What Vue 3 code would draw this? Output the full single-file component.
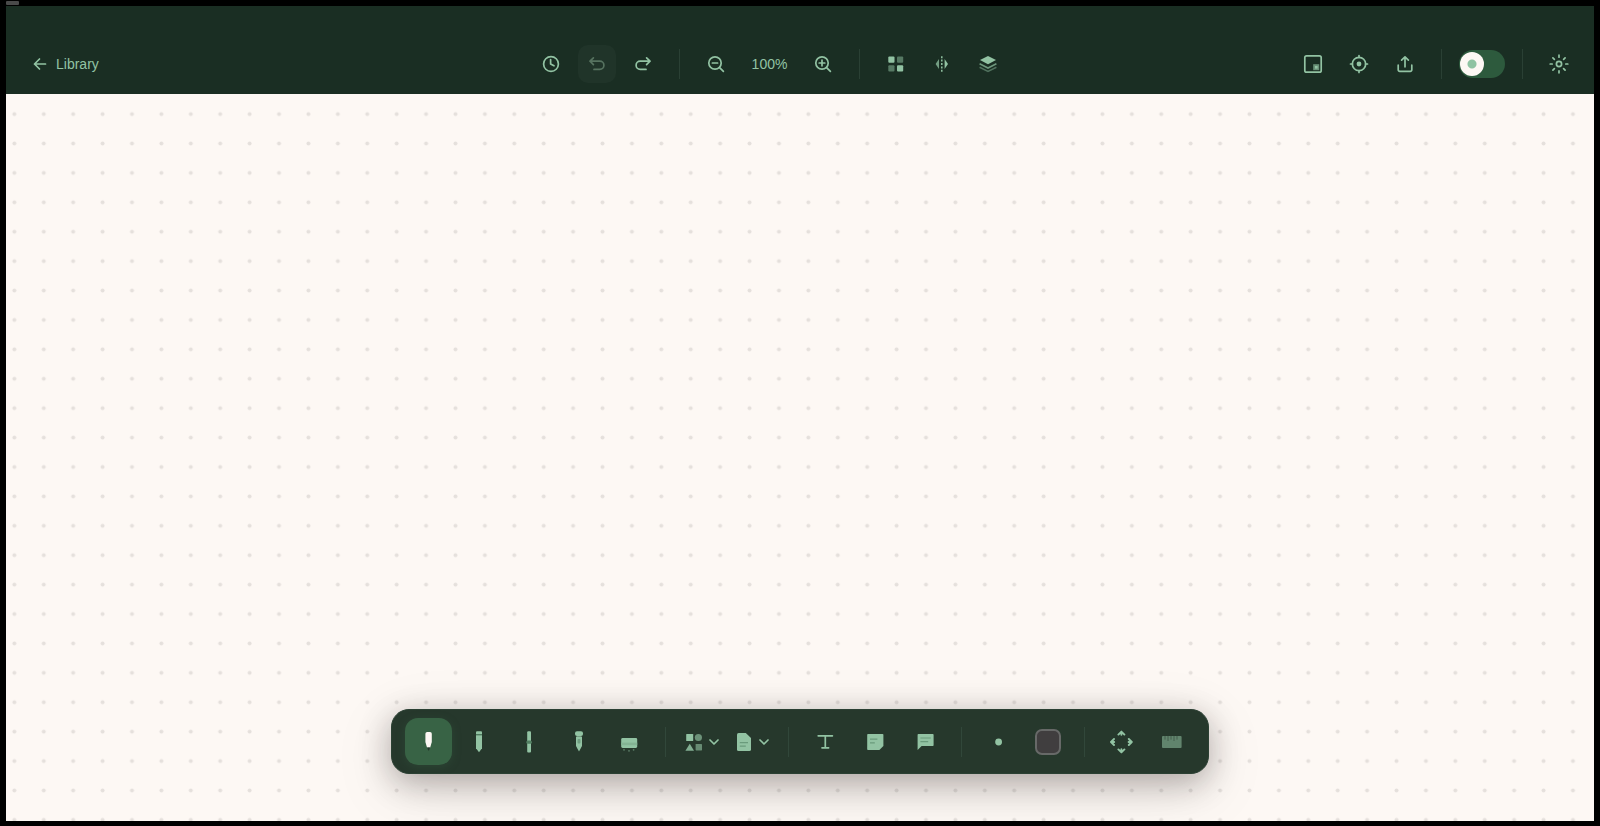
<template>
  <div class="frame">
    <span class="frame-tab"></span>
    <div class="screen">
      <header class="topbar">
        <nav class="topbar-left">
          <a href="#library" class="back-link">
            <svg width="14" height="14" viewBox="0 0 14 14" class="stroke"><path d="M12.5 7H1.5M6.5 2 1.5 7l5 5" /></svg>
            <span>Library</span>
          </a>
        </nav>

        <div class="topbar-group">
          <button type="button" class="tb-btn" aria-label="History">
            <svg width="20" height="20" viewBox="0 0 20 20" class="stroke"><circle cx="10" cy="10" r="7.4" /><path d="M9.6 5.6V10l3.4 1.8" /></svg>
          </button>
          <button type="button" class="tb-btn undo" aria-label="Undo" disabled>
            <svg width="20" height="20" viewBox="0 0 20 20" class="stroke"><path d="M6.4 3.8 3 7.2l3.4 3.4M3 7.2h9.8a4.1 4.1 0 0 1 0 8.2H7" /></svg>
          </button>
          <button type="button" class="tb-btn" aria-label="Redo">
            <svg width="20" height="20" viewBox="0 0 20 20" class="stroke"><path d="M13.6 3.8 17 7.2l-3.4 3.4M17 7.2H7.2a4.1 4.1 0 0 0 0 8.2H13" /></svg>
          </button>
          <span class="tb-sep"></span>
          <button type="button" class="tb-btn" aria-label="Zoom out" @click="zoomBy(-10)">
            <svg width="20" height="20" viewBox="0 0 20 20" class="stroke"><circle cx="9" cy="9" r="6.2" /><path d="M13.6 13.6l3.8 3.8M6.4 9h5.2" /></svg>
          </button>
          <button type="button" class="zoom-value" @click="zoom = 100">{{ zoom }}%</button>
          <button type="button" class="tb-btn" aria-label="Zoom in" @click="zoomBy(10)">
            <svg width="20" height="20" viewBox="0 0 20 20" class="stroke"><circle cx="9" cy="9" r="6.2" /><path d="M13.6 13.6l3.8 3.8M6.2 9h5.6M9 6.2v5.6" /></svg>
          </button>
          <span class="tb-sep"></span>
          <button type="button" class="tb-btn" aria-label="Grid">
            <svg width="20" height="20" viewBox="0 0 20 20" fill="currentColor">
              <rect x="2.3" y="2.6" width="6.2" height="6.2" rx="1" />
              <rect x="11" y="2.6" width="6.2" height="6.2" rx="1" opacity=".5" />
              <rect x="2.3" y="11.2" width="6.2" height="6.2" rx="1" opacity=".5" />
              <rect x="11" y="11.2" width="6.2" height="6.2" rx="1" />
            </svg>
          </button>
          <button type="button" class="tb-btn" aria-label="Symmetry">
            <svg width="20" height="20" viewBox="0 0 20 20" fill="currentColor">
              <path d="M3.6 10 7 5v10z" opacity=".75" />
              <path d="M16 10 12.6 5v10z" />
              <path d="M9.8 2.2v15.6" fill="none" stroke="currentColor" stroke-width="1.5" stroke-dasharray="2 1.4" />
            </svg>
          </button>
          <button type="button" class="tb-btn" aria-label="Layers">
            <svg width="20" height="20" viewBox="0 0 20 20" fill="currentColor">
              <path d="M10 2 18 6.1 10 10.2 2 6.1z" />
              <path d="M1.6 9.8 10 14l8.4-4.2" fill="none" stroke="currentColor" stroke-width="1.6" opacity=".7" />
              <path d="M1.6 13.2 10 17.4l8.4-4.2" fill="none" stroke="currentColor" stroke-width="1.6" opacity=".45" />
            </svg>
          </button>
        </div>

        <div class="topbar-group">
          <button type="button" class="tb-btn" aria-label="Minimap">
            <svg width="20" height="20" viewBox="0 0 20 20" class="stroke">
              <rect x="1.8" y="1.8" width="16.4" height="16.4" rx="1.8" />
              <rect x="10.2" y="10.2" width="6" height="6" fill="currentColor" stroke="none" opacity=".65" />
              <rect x="12" y="12" width="2.6" height="2.6" fill="currentColor" stroke="none" />
            </svg>
          </button>
          <button type="button" class="tb-btn" aria-label="Focus">
            <svg width="20" height="20" viewBox="0 0 20 20" class="stroke">
              <circle cx="10" cy="10" r="6.7" />
              <circle cx="10" cy="10" r="2.4" fill="currentColor" stroke="none" />
              <path d="M10 1.5v2M10 16.5v2M1.5 10h2M16.5 10h2" />
            </svg>
          </button>
          <button type="button" class="tb-btn" aria-label="Export">
            <svg width="20" height="20" viewBox="0 0 20 20" class="stroke"><path d="M10 12.8V3M6.6 6.2 10 2.8l3.4 3.4M3.2 11.2v4.6a1.5 1.5 0 0 0 1.5 1.5h10.6a1.5 1.5 0 0 0 1.5-1.5v-4.6" /></svg>
          </button>
          <span class="tb-sep"></span>
          <label class="switch">
            <input v-model="dark" type="checkbox" aria-label="Dark theme" />
            <span class="knob"></span>
          </label>
          <span class="tb-sep"></span>
          <button type="button" class="tb-btn" aria-label="Settings">
            <svg width="20" height="20" viewBox="0 0 20 20" class="stroke">
              <circle cx="10" cy="10" r="2.6" />
              <path d="M10 1.2v2M10 16.8v2M1.2 10h2M16.8 10h2M3.9 3.9l1.5 1.5M14.6 14.6l1.5 1.5M3.9 16.1l1.5-1.5M14.6 5.4l1.5-1.5" />
            </svg>
          </button>
        </div>
      </header>

      <main class="canvas">
        <svg class="dots" viewBox="0 0 1080 600" preserveAspectRatio="xMinYMin slice" aria-hidden="true">
          <defs>
            <pattern id="dot-grid" width="20" height="20" patternUnits="userSpaceOnUse">
              <circle cx="5.7" cy="13.7" r="1.35" fill="#e5e0dc" />
            </pattern>
          </defs>
          <rect width="1080" height="600" fill="url(#dot-grid)" />
        </svg>

        <div class="dock-wrap">
          <div class="dock" role="toolbar" aria-label="Tools">
            <button type="button" class="tool" :class="{ active: tool === 'pen' }" aria-label="Pen" @click="tool = 'pen'">
              <svg width="24" height="24" viewBox="0 0 24 24" fill="currentColor">
                <path d="M8.4 3.8Q8.400 2 10.200 2h2.800Q14.800 2 14.800 3.800V12l-1.600 5.600h-3.200L8.400 12z" />
                <path d="M10.200 17.400H13L12 20.400h-.8z" fill="#26382c" />
              </svg>
            </button>
            <button type="button" class="tool" :class="{ active: tool === 'pencil' }" aria-label="Pencil" @click="tool = 'pencil'">
              <svg width="24" height="24" viewBox="0 0 24 24" fill="currentColor">
                <path d="M9 2.2q0-1 1-1h4q1 0 1 1v16l-3 4-3-4z" />
                <path d="M9 4.7h6" stroke="#4e7a5e" stroke-width="1.4" />
              </svg>
            </button>
            <button type="button" class="tool" :class="{ active: tool === 'marker' }" aria-label="Marker" @click="tool = 'marker'">
              <svg width="24" height="24" viewBox="0 0 24 24" fill="currentColor">
                <rect x="10.2" y="1.3" width="3.8" height="21.2" rx="1" />
                <rect x="9.3" y="10.4" width="5.6" height="3.4" rx="1.5" fill="#527f62" />
              </svg>
            </button>
            <button type="button" class="tool" :class="{ active: tool === 'fountain' }" aria-label="Fountain pen" @click="tool = 'fountain'">
              <svg width="24" height="24" viewBox="0 0 24 24" fill="currentColor">
                <rect x="8" y="1.2" width="8" height="4.8" rx="2" />
                <path d="M9 6.8h6V16l-3 5.600L9 16z" />
                <rect x="9.6" y="5.6" width="4.8" height="1.4" opacity=".6" />
                <rect x="10.5" y="9" width="3" height="4.6" rx="1" fill="#6f9e80" />
              </svg>
            </button>
            <button type="button" class="tool" :class="{ active: tool === 'eraser' }" aria-label="Eraser" @click="tool = 'eraser'">
              <svg width="24" height="24" viewBox="0 0 24 24" fill="currentColor">
                <rect x="4.2" y="8" width="16" height="10" rx="1.4" />
                <rect x="4.2" y="12.6" width="16" height="2.6" fill="#84b394" />
                <g opacity=".5"><circle cx="7" cy="19.8" r=".9" /><circle cx="12" cy="20.8" r=".9" /><circle cx="16.6" cy="19.8" r=".9" /></g>
              </svg>
            </button>
            <span class="dock-sep"></span>
            <button type="button" class="tool menu" aria-label="Shapes" aria-haspopup="true">
              <svg width="18" height="18" viewBox="0 0 18 18" fill="currentColor">
                <rect x="1.2" y="1" width="7" height="7" rx=".6" />
                <circle cx="13.4" cy="4.5" r="3.6" opacity=".65" />
                <path d="M4.8 10.8 9 17.8H.4z" opacity=".85" />
                <rect x="10.6" y="11" width="6.4" height="6.4" rx=".6" opacity=".6" />
              </svg>
              <svg width="10" height="10" viewBox="0 0 10 10" class="stroke"><path d="M1 3l4 4 4-4" /></svg>
            </button>
            <button type="button" class="tool menu" aria-label="Page" aria-haspopup="true">
              <svg width="18" height="18" viewBox="0 0 18 18" fill="currentColor">
                <path d="M2 1.6Q2 0 3.6 0h7.2L16 5v11.400q0 1.600-1.600 1.600H3.600Q2 18 2 16.400z" />
                <path d="M4.8 9.6H13M4.8 13.2h6" stroke="#6a9b7c" stroke-width="1.2" />
              </svg>
              <svg width="10" height="10" viewBox="0 0 10 10" class="stroke"><path d="M1 3l4 4 4-4" /></svg>
            </button>
            <span class="dock-sep"></span>
            <button type="button" class="tool" :class="{ active: tool === 'text' }" aria-label="Text" @click="tool = 'text'">
              <svg width="24" height="24" viewBox="0 0 24 24" class="stroke"><path d="M5.2 5.8h14.2M12.3 5.8v12M9 17.8h6.6" /></svg>
            </button>
            <button type="button" class="tool" :class="{ active: tool === 'note' }" aria-label="Sticky note" @click="tool = 'note'">
              <svg width="24" height="24" viewBox="0 0 24 24" fill="currentColor">
                <path d="M5 4h14.600q.8 0 .8.800V16l-4 4H5q-.8 0-.8-.8V4.800Q4.200 4 5 4z" />
                <path d="M7 9.2h7.4M7 12.8h4.8" stroke="#6a9b7c" stroke-width="1.2" />
              </svg>
            </button>
            <button type="button" class="tool" :class="{ active: tool === 'comment' }" aria-label="Comment" @click="tool = 'comment'">
              <svg width="24" height="24" viewBox="0 0 24 24" fill="currentColor">
                <path d="M5.4 4h14.400q.8 0 .8.800v10.400q0 .8-.8.800H8.600l-4 4V4.800q0-.8.800-.8z" />
                <path d="M7.4 8h10.4M7.4 11.6h7.8" stroke="#6a9b7c" stroke-width="1.2" />
              </svg>
            </button>
            <span class="dock-sep"></span>
            <button type="button" class="tool" aria-label="Stroke size">
              <svg width="24" height="24" viewBox="0 0 24 24" fill="currentColor"><circle cx="12.6" cy="12" r="3.4" /></svg>
            </button>
            <button type="button" class="tool" aria-label="Stroke color"><span class="swatch"></span></button>
            <span class="dock-sep"></span>
            <button type="button" class="tool" aria-label="Pan">
              <svg width="24" height="24" viewBox="0 0 24 24" class="stroke">
                <path d="M9.4 4.6l3-3 3 3M12.4 1.8v3M9.4 19.4l3 3 3-3M12.4 22.2v-3M5 9l-3 3 3 3M2.2 12h3M19.8 9l3 3-3 3M22.6 12h-3" stroke-width="1.9" />
              </svg>
            </button>
            <button type="button" class="tool" aria-label="Ruler" disabled>
              <svg width="24" height="24" viewBox="0 0 24 24" fill="currentColor">
                <rect x="3" y="6" width="19.6" height="12" rx="1" />
                <path d="M6 6v3.600M9 6v5M12 6v3.600M15 6v5M18 6v3.600" stroke="#26382c" opacity=".5" />
              </svg>
            </button>
          </div>
        </div>
      </main>
    </div>
  </div>
</template>

<script setup>
import { ref } from 'vue'

const tool = ref('pen')
const zoom = ref(100)
const dark = ref(false)

function zoomBy(step) {
  zoom.value = Math.min(400, Math.max(10, zoom.value + step))
}
</script>

<style>
body { margin:0;background:#000 }
</style>

<style scoped>
.frame {
  position:relative;box-sizing:border-box;min-height:100vh;padding:6px 6px 5px;
  display:flex;background:#000;color:#92c3a3;
  font-family:"Liberation Sans",Arial,sans-serif;font-size:14px;
}
.frame-tab { position:absolute;left:6px;top:1px;width:13px;height:4px;background:#4a4a4a;border-radius:1px }
.screen { flex:1;display:flex;flex-direction:column;min-width:0 }
button { font:inherit;color:inherit;background:none;border:none;padding:0;cursor:pointer }
svg { display:block;flex-shrink:0 }
.stroke { fill:none;stroke:currentColor;stroke-width:1.7px;stroke-linecap:round;stroke-linejoin:round }

.topbar {
  display:flex;justify-content:space-between;align-items:center;
  padding:39px 16px 11px;background:#1a2e23;
}
.topbar-left { min-width:223px }
.back-link { display:inline-flex;align-items:center;gap:9px;padding:2px 11px 0;color:inherit;text-decoration:none }
.topbar-group { display:flex;align-items:center;gap:8px }
.tb-btn { width:38px;height:38px;border-radius:10px;display:flex;align-items:center;justify-content:center }
.tb-btn:hover { background:#203429 }
.undo { background:#203429;color:#56725f;cursor:default }
.tb-sep { width:1px;height:30px;margin:0 9px;background:#2a4034 }
.zoom-value { width:53px;height:38px;text-align:center }

.switch { position:relative;display:flex;align-items:center;box-sizing:border-box;width:46px;height:28px;padding:0 1px;border-radius:14px;background:#2d5a3d;cursor:pointer }
.switch input { position:absolute;inset:0;width:100%;height:100%;margin:0;opacity:0;cursor:pointer }
.knob { width:24px;height:24px;border-radius:50%;background:radial-gradient(circle,#8fc3a2 4px,#fdf8f4 5px);pointer-events:none }
.switch input:checked + .knob { margin-left:auto }

.canvas { position:relative;flex:1;display:flex;overflow:hidden;background:#fdf8f4 }
.dots { position:absolute;inset:0;width:100%;height:100% }
.dock-wrap { position:relative;flex:1;display:flex;align-items:flex-end;justify-content:center;padding-bottom:47px }
.dock {
  display:flex;align-items:center;gap:3px;padding:8px 14px 8px 13px;
  border:1px solid #2b4033;border-radius:18px;background:#26382c;
  box-shadow:0 8px 32px rgba(24,14,12,0.3),0 16px 64px rgba(24,14,12,0.1);
}
.tool { width:47px;height:47px;border-radius:13px;display:flex;align-items:center;justify-content:center }
.tool:hover { background:#2d4435 }
.tool.active { background:#386345;color:#fdf8f4;box-shadow:0 2px 10px rgba(56,99,69,0.3) }
.tool.menu { gap:6px }
.tool:disabled { opacity:0.55;background:none;cursor:default }
.dock-sep { width:1px;height:30px;margin:0 9px 0 10px;background:#31473a }
.swatch { box-sizing:border-box;width:26px;height:26px;border:2px solid #676968;border-radius:7px;background:#403e3f }
</style>
